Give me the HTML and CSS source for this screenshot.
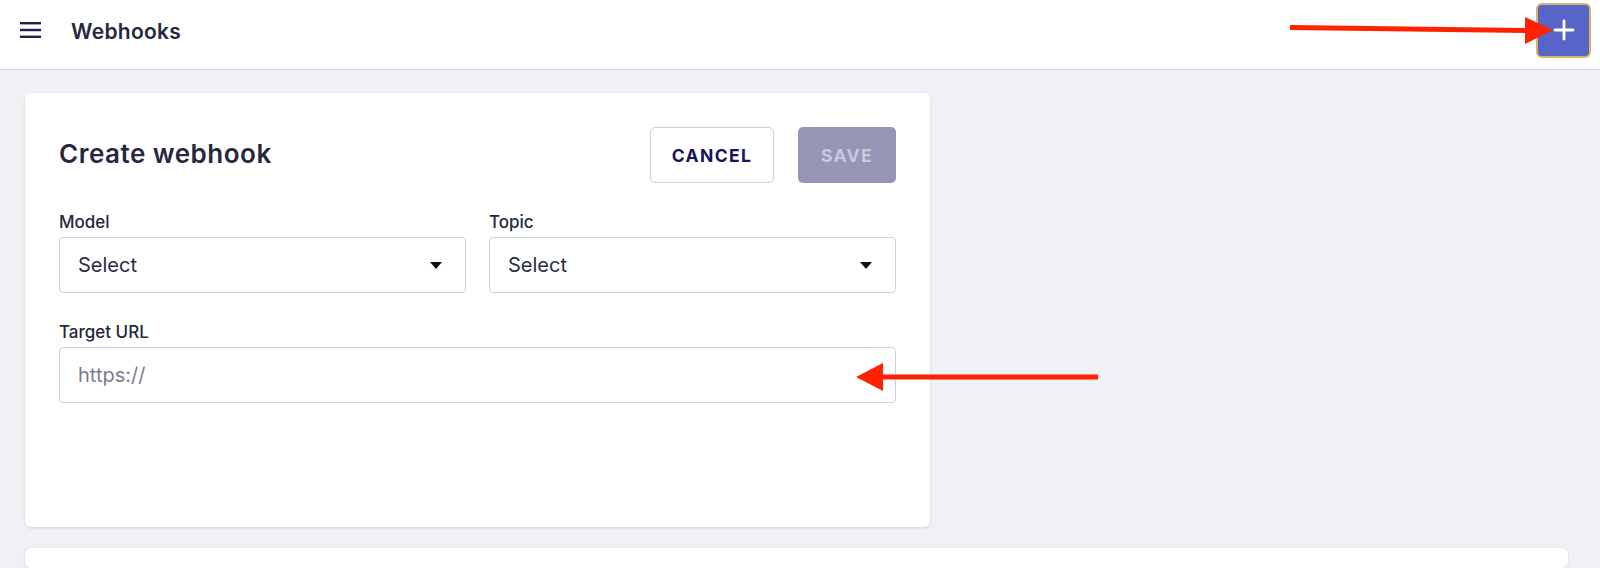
FILE: index.html
```html
<!DOCTYPE html>
<html lang="en">
<head>
  <meta charset="UTF-8" />
  <meta name="viewport" content="width=device-width, initial-scale=1.0"/>
  <title>Webhooks</title>
  <link rel="stylesheet" href="styles.css">
</head>
<body>
  <header class="topbar">
    <button class="menu-button" aria-label="Menu">
      <svg width="21" height="16" viewBox="0 0 21 16">
        <rect x="0" y="0" width="21" height="2.4" fill="#1f2150"/>
        <rect x="0" y="6.8" width="21" height="2.4" fill="#1f2150"/>
        <rect x="0" y="13.6" width="21" height="2.4" fill="#1f2150"/>
      </svg>
    </button>
    <h1 class="page-title">Webhooks</h1>
    <button class="add-button" aria-label="Add">
      <svg width="22" height="22" viewBox="0 0 22 22">
        <path d="M11 2v18M2 11h18" stroke="#fff" stroke-width="2.8" stroke-linecap="round"/>
      </svg>
    </button>
  </header>

  <main class="content">
    <section class="card">
      <div class="card-head">
        <h2 class="card-title">Create webhook</h2>
        <div class="actions">
          <button class="btn btn-outline">CANCEL</button>
          <button class="btn btn-disabled" disabled>SAVE</button>
        </div>
      </div>

      <div class="field-row two">
        <div class="field">
          <label>Model</label>
          <div class="select">
            <span>Select</span>
            <span class="caret"></span>
          </div>
        </div>
        <div class="field">
          <label>Topic</label>
          <div class="select">
            <span>Select</span>
            <span class="caret"></span>
          </div>
        </div>
      </div>

      <div class="field-row">
        <div class="field">
          <label for="target-url">Target URL</label>
          <input id="target-url" class="text-input" type="text" placeholder="https://">
        </div>
      </div>
    </section>

    <section class="card card-next"></section>
  </main>

  <!-- annotation arrows -->
  <svg class="annotations" width="1600" height="568" viewBox="0 0 1600 568">
    <path d="M1290 27.5 L1530 30.5" stroke="#ff2200" stroke-width="5"/>
    <polygon points="1525,17 1553,30 1525,44" fill="#ff2200"/>
    <path d="M1098 377 L878 377" stroke="#ff2200" stroke-width="5"/>
    <polygon points="883,363 856,377 883,391" fill="#ff2200"/>
  </svg>
</body>
</html>
```

FILE: styles.css
```css
/* Page */
html, body {
  margin: 0;
  padding: 0;
  height: 100%;
  overflow: hidden;
}
body {
  position: relative;
  background: #f0f1f4;
  color: #25273f;
  font-family: Inter, "Noto Sans", sans-serif;
}
button {
  font-family: inherit;
}

/* Top bar */
.topbar {
  display: flex;
  align-items: center;
  height: 60px;
  padding: 0 9px 9px 20px;
  background: #fff;
  border-bottom: 1px solid #d3d4dc;
}
.menu-button {
  display: flex;
  padding: 0;
  border: none;
  background: none;
  cursor: pointer;
}
.page-title {
  margin: 2px 0 0 30px;
  font-size: 21px;
  font-weight: 600;
  color: #262840;
  letter-spacing: 0.3px;
}
.add-button {
  margin-left: auto;
  width: 55px;
  height: 55px;
  display: flex;
  align-items: center;
  justify-content: center;
  background: #5865c8;
  border: 2px solid #d9b26d;
  border-radius: 6px;
  cursor: pointer;
}

/* Content */
.content {
  padding: 23px 32px 0 25px;
}
.card {
  width: 837px;
  padding: 34px 34px 124px 34px;
  background: #fff;
  border-radius: 6px;
  box-shadow: 0 1px 3px rgba(30, 32, 60, 0.14);
}
.card-next {
  width: auto;
  height: 20px;
  margin-top: 21px;
  padding: 0;
}
.card-head {
  display: flex;
  align-items: center;
  justify-content: space-between;
  height: 56px;
}
.card-title {
  margin: 0 0 4px 0;
  font-size: 26px;
  font-weight: 600;
  letter-spacing: 0.5px;
  color: #262840;
}
.actions {
  display: flex;
  gap: 24px;
}
.btn {
  height: 56px;
  border-radius: 5px;
  font-size: 17.5px;
  font-weight: 700;
  letter-spacing: 1.4px;
}
.btn-outline {
  width: 124px;
  background: #fff;
  border: 1px solid #cfd0dc;
  color: #17145c;
}
.btn-disabled {
  width: 98px;
  background: #9795b6;
  border: none;
  color: #c9c8dd;
}

/* Form */
.field-row {
  margin-top: 29px;
}
.field-row.two {
  display: grid;
  grid-template-columns: 1fr 1fr;
  gap: 23px;
}
.field label {
  display: block;
  margin-bottom: 5px;
  font-size: 17px;
  line-height: 20px;
  font-weight: 500;
  color: #25273f;
}
.select {
  display: flex;
  align-items: center;
  justify-content: space-between;
  height: 54px;
  padding: 0 23px 0 18px;
  border: 1px solid #cfd0dc;
  border-radius: 4px;
  font-size: 20px;
  color: #2a2c45;
}
.caret {
  width: 0;
  height: 0;
  border-left: 6px solid transparent;
  border-right: 6px solid transparent;
  border-top: 7px solid #111;
}
.text-input {
  box-sizing: border-box;
  width: 100%;
  height: 56px;
  padding: 0 18px;
  border: 1px solid #cfd0dc;
  border-radius: 4px;
  font-family: inherit;
  font-size: 20px;
  color: #2a2c45;
  outline: none;
}
.text-input::placeholder {
  color: #7b7c92;
}

/* Annotation overlay */
.annotations {
  position: absolute;
  top: 0;
  left: 0;
  pointer-events: none;
}
```
